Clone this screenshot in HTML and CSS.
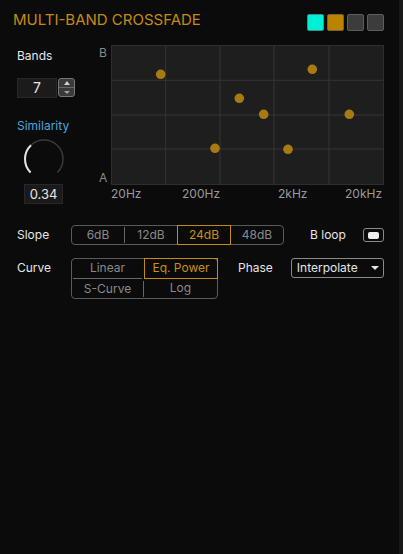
FILE: index.html
```html
<!DOCTYPE html>
<html lang="en">
<head>
    <meta charset="UTF-8">
    <meta name="viewport" content="width=device-width, initial-scale=1.0">
    <title>Multi-Band Crossfade</title>
    <link rel="stylesheet" href="styles.css">
</head>
<body>
    <div class="panel">
        <div class="header">
            <div class="title">MULTI-BAND CROSSFADE</div>
            <div class="swatches">
                <div class="swatch cyan"></div>
                <div class="swatch gold"></div>
                <div class="swatch"></div>
                <div class="swatch"></div>
            </div>
        </div>

        <div class="main">
            <div class="left-col">
                <div class="label">Bands</div>
                <div class="bands-row">
                    <div class="num-box">7</div>
                    <div class="stepper">
                        <div class="step up"></div>
                        <div class="step down"></div>
                    </div>
                </div>
                <div class="similarity">Similarity</div>
                <svg class="knob" width="44" height="44" viewBox="0 0 44 44">
                    <path d="M 8.565 35.435 A 19 19 0 1 1 35.435 35.435" fill="none" stroke="#3a3a3a" stroke-width="1.5"/>
                    <path d="M 8.565 35.435 A 19 19 0 0 1 9.0 8.15" fill="none" stroke="#e4e4e4" stroke-width="2"/>
                </svg>
                <div class="value-box">0.34</div>
            </div>

            <div class="plot-area">
                <div class="plot-row">
                    <div class="y-labels">
                        <span>B</span>
                        <span>A</span>
                    </div>
                    <svg class="plot" width="273" height="140" viewBox="0 0 273 140">
                        <rect x="0.5" y="0.5" width="272" height="139" fill="#1e1e1e" stroke="#2e2e2e"/>
                        <g stroke="#343434" stroke-width="1">
                            <line x1="54.7" y1="1" x2="54.7" y2="139"/>
                            <line x1="109" y1="1" x2="109" y2="139"/>
                            <line x1="163" y1="1" x2="163" y2="139"/>
                            <line x1="218" y1="1" x2="218" y2="139"/>
                            <line x1="1" y1="35.3" x2="272" y2="35.3"/>
                            <line x1="1" y1="70" x2="272" y2="70"/>
                            <line x1="1" y1="104" x2="272" y2="104"/>
                        </g>
                        <g fill="#a87a12">
                            <circle cx="49.7" cy="29.3" r="4.8"/>
                            <circle cx="128.3" cy="53.3" r="4.8"/>
                            <circle cx="152.7" cy="69.3" r="4.8"/>
                            <circle cx="201.3" cy="24.3" r="4.8"/>
                            <circle cx="238.3" cy="69.3" r="4.8"/>
                            <circle cx="104" cy="103.3" r="4.8"/>
                            <circle cx="177" cy="104.3" r="4.8"/>
                        </g>
                    </svg>
                </div>
                <div class="x-labels">
                    <span style="left: 0px;">20Hz</span>
                    <span style="left: 71px;">200Hz</span>
                    <span style="left: 167px;">2kHz</span>
                    <span style="left: 234px;">20kHz</span>
                </div>
            </div>
        </div>

        <div class="row slope-row">
            <div class="row-label">Slope</div>
            <div class="seg-group">
                <div class="seg">6dB</div>
                <div class="seg sep">12dB</div>
                <div class="seg active">24dB</div>
                <div class="seg">48dB</div>
            </div>
            <div class="bloop">B loop</div>
            <div class="toggle"><div class="toggle-knob"></div></div>
        </div>

        <div class="row curve-row">
            <div class="row-label">Curve</div>
            <div class="curve-grid">
                <div class="cell linear">Linear</div>
                <div class="cell active">Eq. Power</div>
                <div class="cell scurve">S-Curve</div>
                <div class="cell">Log</div>
            </div>
            <div class="phase">Phase</div>
            <div class="dropdown">
                <span>Interpolate</span>
                <span class="caret"></span>
            </div>
        </div>
    </div>
</body>
</html>
```

FILE: styles.css
```css
body {
    margin: 0;
    padding: 0;
    background-color: #181818;
    font-family: Inter, "Noto Sans", sans-serif;
    color: #e6e6e6;
}
.panel {
    width: 399px;
    min-height: 554px;
    box-sizing: border-box;
    background-color: #0b0b0b;
    padding: 10px 15px 0 17px;
}

/* header */
.header {
    display: flex;
    justify-content: space-between;
    align-items: flex-start;
    margin-left: -4px;
}
.title {
    font-size: 15px;
    line-height: 20px;
    color: #c38b10;
}
.swatches {
    display: flex;
    gap: 3px;
    margin-top: 4px;
}
.swatch {
    width: 17px;
    height: 17px;
    box-sizing: border-box;
    border: 1px solid #5e5e5e;
    border-radius: 2px;
    background-color: #3c3c3c;
}
.swatch.cyan {
    background-color: #00f0d6;
    border-color: #3a8f86;
}
.swatch.gold {
    background-color: #bb8300;
    border-color: #7a6230;
}

/* main area */
.main {
    display: flex;
    margin-top: 14px;
}
.left-col {
    width: 60px;
    flex-shrink: 0;
}
.label {
    font-size: 12px;
    line-height: 16px;
    margin-top: 3px;
}
.bands-row {
    display: flex;
    margin-top: 14px;
}
.num-box {
    width: 40px;
    height: 20px;
    box-sizing: border-box;
    background-color: #1b1b1b;
    border: 1px solid #282828;
    font-size: 14px;
    line-height: 18px;
    text-align: center;
}
.stepper {
    width: 17px;
    height: 19px;
    margin-left: 1px;
    box-sizing: border-box;
    border: 1px solid #777;
    border-radius: 3px;
    background-color: #3a3a3a;
    display: flex;
    flex-direction: column;
}
.step {
    flex: 1;
    display: flex;
    align-items: center;
    justify-content: center;
}
.step.up {
    border-bottom: 1px solid #666;
}
.step.up::after {
    content: "";
    border-left: 3px solid transparent;
    border-right: 3px solid transparent;
    border-bottom: 4px solid #d0d0d0;
}
.step.down::after {
    content: "";
    border-left: 3px solid transparent;
    border-right: 3px solid transparent;
    border-top: 3px solid #a0a0a0;
}
.similarity {
    margin-top: 20px;
    font-size: 12px;
    line-height: 16px;
    color: #4aa6dc;
}
.knob {
    display: block;
    margin: 2.5px 0 0 4.5px;
}
.value-box {
    width: 39px;
    height: 20px;
    margin: 3.5px 0 0 7px;
    box-sizing: border-box;
    background-color: #1a1a1a;
    border: 1px solid #282828;
    font-size: 13px;
    line-height: 18px;
    text-align: center;
}

/* plot */
.plot-area {
    margin-left: 22px;
}
.plot-row {
    display: flex;
}
.y-labels {
    width: 12px;
    height: 140px;
    box-sizing: border-box;
    padding-top: 1px;
    display: flex;
    flex-direction: column;
    justify-content: space-between;
    font-size: 12px;
    line-height: 14px;
    color: #8a8a8a;
}
.plot {
    display: block;
}
.x-labels {
    position: relative;
    height: 16px;
    margin-left: 12px;
    font-size: 12px;
    line-height: 14px;
    color: #9a9a9a;
}
.x-labels span {
    position: absolute;
    top: 2px;
}

/* control rows */
.row {
    display: flex;
}
.row > * {
    flex-shrink: 0;
    white-space: nowrap;
}
.slope-row {
    margin-top: 21px;
    align-items: center;
    height: 20px;
}
.curve-row {
    margin-top: 13px;
    align-items: flex-start;
}
.row-label {
    width: 54px;
    font-size: 12px;
    line-height: 20px;
}
.seg-group {
    width: 213px;
    height: 20px;
    box-sizing: border-box;
    border: 1px solid #5a5a5a;
    border-radius: 4px;
    display: flex;
    align-items: center;
}
.seg {
    flex: 1;
    height: 16px;
    box-sizing: border-box;
    font-size: 12px;
    line-height: 16px;
    text-align: center;
    color: #8a8a8a;
}
.seg.sep {
    border-left: 1px solid #666;
}
.seg.active {
    height: 20px;
    line-height: 18px;
    border: 1px solid #c38b10;
    color: #c9900f;
}
.bloop {
    margin-left: 26px;
    font-size: 12px;
    line-height: 20px;
}
.toggle {
    margin-left: 17px;
    width: 21px;
    height: 14px;
    box-sizing: border-box;
    border: 1.5px solid #8a8a8a;
    border-radius: 3px;
    display: flex;
    align-items: center;
    justify-content: center;
}
.toggle-knob {
    width: 11px;
    height: 7px;
    border-radius: 2px;
    background-color: #f0f0f0;
}
.curve-grid {
    width: 147px;
    height: 41px;
    box-sizing: border-box;
    border: 1px solid #5a5a5a;
    border-radius: 4px;
    display: grid;
    grid-template-columns: 72px 73px;
    grid-template-rows: 20px 19px;
}
.cell {
    box-sizing: border-box;
    font-size: 12px;
    line-height: 18px;
    text-align: center;
    color: #8a8a8a;
}
.cell.linear {
    border-bottom: 1.5px solid #666;
    margin: 0 2px 0 1px;
}
.cell.scurve {
    border-right: 1px solid #666;
    margin: 2px 0 1px;
    line-height: 16px;
}
.cell.active {
    margin: -1px -1px 0 0;
    height: 21px;
    border: 1px solid #c38b10;
    color: #c9900f;
}
.phase {
    margin-left: 20px;
    font-size: 12px;
    line-height: 20px;
}
.dropdown {
    margin-left: 18px;
    width: 93px;
    height: 20px;
    box-sizing: border-box;
    border: 1px solid #8a8a8a;
    border-radius: 3px;
    padding: 0 4px 0 5px;
    display: flex;
    align-items: center;
    justify-content: space-between;
    font-size: 12px;
    line-height: 18px;
}
.caret {
    border-left: 4px solid transparent;
    border-right: 4px solid transparent;
    border-top: 4px solid #e6e6e6;
}
```
